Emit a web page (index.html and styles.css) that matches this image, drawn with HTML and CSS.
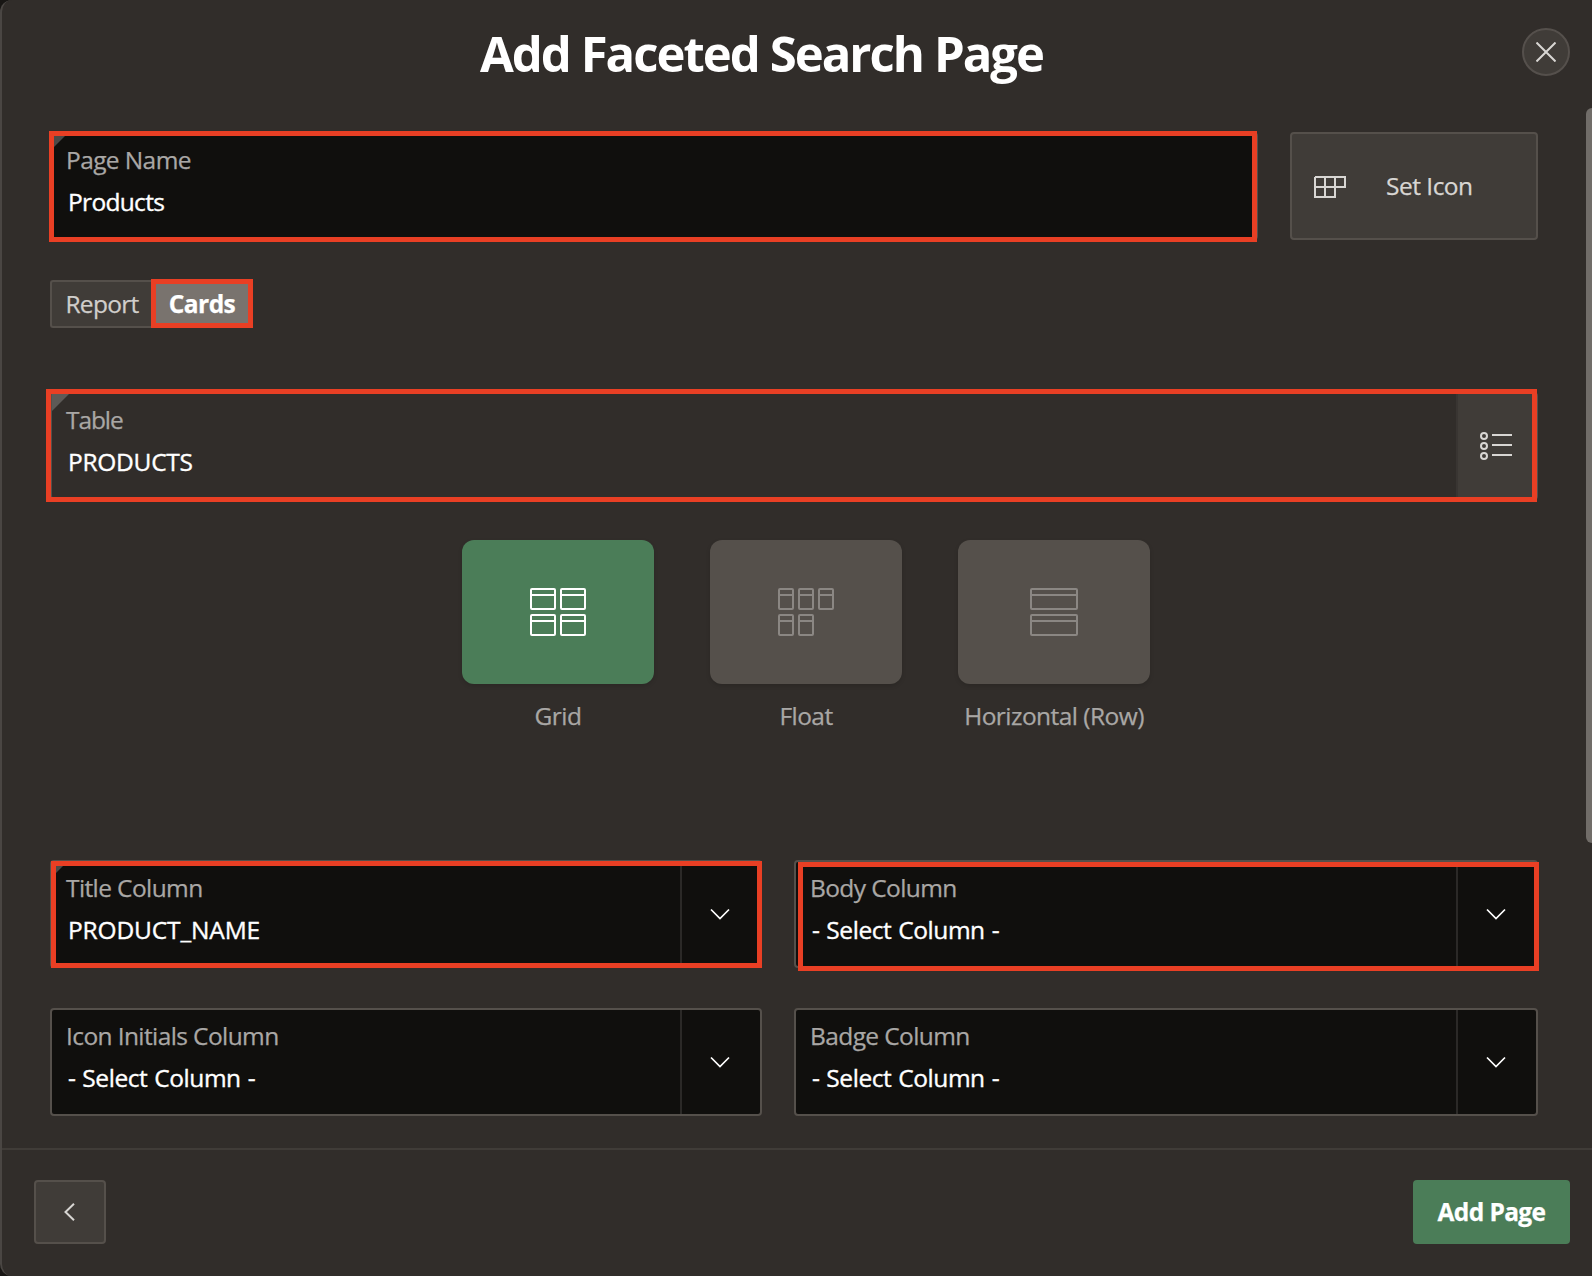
FILE: index.html
```html
<!DOCTYPE html>
<html lang="en">
<head>
<meta charset="utf-8">
<title>Add Faceted Search Page</title>
<link rel="stylesheet" href="styles.css">
</head>
<body>
<main class="dialog">
  <header class="head">
    <h1 class="title">Add Faceted Search Page</h1>
    <button class="close" aria-label="Close"><svg width="20" height="20" viewBox="0 0 20 20"><path d="M.5 .5L19.5 19.5M19.5 .5L.5 19.5"/></svg></button>
  </header>
  <section class="content">
    <div class="row name-row">
      <div class="field required">
        <div class="texts"><span class="label w-page">Page Name</span><span class="value w-products">Products</span></div>
        <i class="mark mark-name"></i>
      </div>
      <button class="set-icon">
        <svg width="32" height="22" viewBox="0 0 32 22"><path d="M1 1H31V11H1M1 1V21H21V1M11 1V21M31 1V11"/></svg>
        <span class="w-set">Set Icon</span>
      </button>
    </div>
    <div class="pills">
      <span class="pill"><span class="w-report">Report</span></span>
      <span class="pill active"><span class="w-cards">Cards</span><i class="mark mark-cards"></i></span>
    </div>
    <div class="field table required">
      <div class="texts"><span class="label w-table">Table</span><span class="value w-table-value">PRODUCTS</span></div>
      <div class="side">
        <svg width="32" height="28" viewBox="0 0 32 28"><circle cx="4" cy="4" r="3"/><circle cx="4" cy="14" r="3"/><circle cx="4" cy="24" r="3"/><path d="M12 3H32M12 13H32M12 23H32"/></svg>
      </div>
      <i class="mark mark-table"></i>
    </div>
    <div class="layouts">
      <div class="layout selected">
        <div class="tile"><svg width="56" height="48" viewBox="0 0 56 48"><rect x="1" y="1" width="24" height="20" rx="1"/><rect x="31" y="1" width="24" height="20" rx="1"/><rect x="1" y="27" width="24" height="20" rx="1"/><rect x="31" y="27" width="24" height="20" rx="1"/><path d="M1 7H25M31 7H55M1 33H25M31 33H55"/></svg></div>
        <span class="caption">Grid</span>
      </div>
      <div class="layout">
        <div class="tile"><svg width="56" height="48" viewBox="0 0 56 48"><rect x="1" y="1" width="14" height="20" rx="1"/><rect x="21" y="1" width="14" height="20" rx="1"/><rect x="41" y="1" width="14" height="20" rx="1"/><rect x="1" y="27" width="14" height="20" rx="1"/><rect x="21" y="27" width="14" height="20" rx="1"/><path d="M1 7H15M21 7H35M41 7H55M1 33H15M21 33H35"/></svg></div>
        <span class="caption">Float</span>
      </div>
      <div class="layout">
        <div class="tile"><svg width="48" height="48" viewBox="0 0 48 48"><rect x="1" y="1" width="46" height="20" rx="1"/><rect x="1" y="27" width="46" height="20" rx="1"/><path d="M1 7H47M1 33H47"/></svg></div>
        <span class="caption">Horizontal (Row)</span>
      </div>
    </div>
    <div class="columns">
      <div class="field required">
        <div class="texts"><span class="label">Title Column</span><span class="value w-product-name">PRODUCT_NAME</span></div>
        <div class="side"><svg class="chevron" width="20" height="12" viewBox="0 0 20 12"><path d="M1 1.5L10 10.5L19 1.5"/></svg></div>
        <i class="mark mark-title"></i>
      </div>
      <div class="field">
        <div class="texts"><span class="label">Body Column</span><span class="value w-select">- Select Column -</span></div>
        <div class="side"><svg class="chevron" width="20" height="12" viewBox="0 0 20 12"><path d="M1 1.5L10 10.5L19 1.5"/></svg></div>
        <i class="mark mark-body"></i>
      </div>
      <div class="field">
        <div class="texts"><span class="label">Icon Initials Column</span><span class="value w-select">- Select Column -</span></div>
        <div class="side"><svg class="chevron" width="20" height="12" viewBox="0 0 20 12"><path d="M1 1.5L10 10.5L19 1.5"/></svg></div>
      </div>
      <div class="field">
        <div class="texts"><span class="label">Badge Column</span><span class="value w-select">- Select Column -</span></div>
        <div class="side"><svg class="chevron" width="20" height="12" viewBox="0 0 20 12"><path d="M1 1.5L10 10.5L19 1.5"/></svg></div>
      </div>
    </div>
  </section>
  <footer class="foot">
    <button class="back" aria-label="Back"><svg width="11" height="18" viewBox="0 0 11 18"><path d="M10 .8L1.5 9L10 17.2"/></svg></button>
    <button class="add"><span class="w-add">Add Page</span></button>
  </footer>
  <i class="scrollbar"></i>
</main>
</body>
</html>
```

FILE: styles.css
```css
* { box-sizing: border-box; }
body {
  margin: 0;
  width: 1592px;
  height: 1276px;
  overflow: hidden;
  background: #181614;
  color: #fff;
  font: 24.5px/30px "Open Sans", "Noto Sans", sans-serif;
  -webkit-text-stroke: .25px currentColor;
}
button { font: inherit; color: #d8d6d3; padding: 0; }
svg { display: block; fill: none; stroke: #d8d6d3; stroke-width: 2; flex: none; }
span { white-space: nowrap; }
.dialog {
  position: relative;
  height: 1276px;
  display: flex;
  flex-direction: column;
  background: #312d2a;
  border-left: 2px solid #4a4643;
  border-radius: 12px 0 0 12px;
}
.head {
  height: 107px;
  flex: none;
  display: flex;
  align-items: flex-start;
  padding: 28px 22px 0 48px;
}
.title {
  flex: 1;
  margin: -9px 0 0 -1px;
  padding-right: 48px;
  text-align: center;
  font-size: 49px;
  line-height: 68px;
  font-weight: 700;
  letter-spacing: -1.95px;
  -webkit-text-stroke: 0;
}
.close {
  width: 48px;
  height: 48px;
  flex: none;
  display: grid;
  place-items: center;
  border: 2px solid #55504c;
  border-radius: 50%;
  background: #403c38;
}
.content { flex: none; height: 1041px; padding: 25px 54px 0 48px; }
.row { display: flex; gap: 32px; }
.field {
  position: relative;
  height: 108px;
  display: flex;
  justify-content: space-between;
  background: #100f0d;
  border: 2px solid #55504b;
  border-radius: 4px;
}
.name-row .field { width: 1208px; }
.texts { display: flex; flex-direction: column; padding: 11px 0 0 14px; }
.label { color: #a9a7a5; height: 42px; letter-spacing: -.6px; }
.value { padding-left: 2px; -webkit-text-stroke: .35px currentColor; }
.w-products { letter-spacing: -.68px; }
.w-table { letter-spacing: -1.1px; }
.w-table-value { letter-spacing: -.28px; }
.w-product-name { letter-spacing: -.15px; }
.w-select { letter-spacing: -.44px; word-spacing: 1px; }
.w-set { letter-spacing: -.5px; }
.w-report { letter-spacing: -.7px; }
.w-cards { letter-spacing: -.55px; }
.w-add { letter-spacing: -.6px; }
.caption { letter-spacing: -.55px; }
.required::before {
  content: "";
  position: absolute;
  left: 0;
  top: 0;
  border-top: 15px solid #4b4a48;
  border-right: 15px solid transparent;
}
.mark { position: absolute; border: 5px solid #e93f24; }
.mark-name { left: -3px; top: -3px; width: 1208px; height: 111px; }
.set-icon {
  width: 248px;
  height: 108px;
  display: flex;
  align-items: center;
  gap: 40px;
  padding-left: 22px;
  border: 2px solid #55504b;
  border-radius: 4px;
  background: #403c38;
}
.set-icon svg { margin-top: 2px; }
.pills { display: flex; margin-top: 40px; height: 48px; }
.pill {
  position: relative;
  width: 102px;
  display: grid;
  place-items: center;
  border: 2px solid #55504b;
  border-right: 0;
  border-radius: 3px 0 0 3px;
  background: #403c38;
  color: #d0cecb;
}
.pill.active { width: 100px; border: 0; background: #79736e; color: #fff; font-weight: 700; }
.mark-cards { left: -1px; top: -1px; width: 102px; height: 49px; }
.table { margin-top: 64px; background: transparent; }
.table::before { border-top-color: #5d5a57; border-width: 17px 17px 0 0; }
.mark-table { left: -6px; top: -5px; width: 1491px; height: 113px; }
.side { width: 80px; padding-right: 2px; display: grid; place-items: center; border-left: 2px solid #2b2927; }
.table .side { background: #403c38; border-color: #393532; }
.layouts { display: flex; justify-content: center; gap: 56px; margin-top: 40px; padding-left: 24px; height: 320px; }
.layout { width: 192px; display: flex; flex-direction: column; align-items: center; gap: 17px; color: #a9a7a5; }
.tile {
  width: 192px;
  height: 144px;
  display: grid;
  place-items: center;
  border-radius: 12px;
  background: #55504b;
  box-shadow: 0 2px 4px #0002;
}
.tile svg { stroke: #8b8783; }
.selected .tile { background: #4b7d58; }
.selected svg { stroke: #fff; }
.columns { display: grid; grid-template-columns: 712px 744px; gap: 40px 32px; }
.chevron { stroke: #fff; stroke-width: 1.7; margin-top: -1px; }
.mark-title { left: -1px; top: -1px; width: 711px; height: 107px; }
.mark-body { left: 2px; top: 0; width: 741px; height: 109px; }
.foot {
  flex: 1;
  display: flex;
  justify-content: space-between;
  align-items: flex-start;
  padding: 30px 22px 0 32px;
  border-top: 2px solid #403c38;
}
.back { width: 72px; height: 64px; display: grid; place-items: center; padding-right: 2px; border: 2px solid #55504b; border-radius: 4px; background: #403c38; }
.add { width: 157px; height: 64px; border: 0; border-radius: 4px; background: #4b7d58; color: #fff; font-weight: 700; }
.scrollbar { position: absolute; left: 1584px; top: 108px; width: 12px; height: 735px; border-radius: 6px; background: #716d69; }
```
